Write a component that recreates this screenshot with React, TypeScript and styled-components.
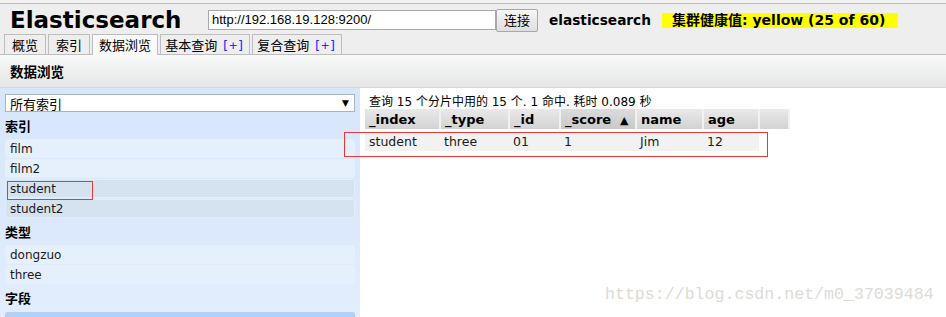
import React from "react";
import styled, { createGlobalStyle } from "styled-components";

const GlobalStyle = createGlobalStyle`
  html, body { margin: 0; padding: 0; background: #ffffff; }
  body {
    font-family: "DejaVu Sans", "Noto Sans CJK SC", sans-serif;
    font-size: 12px;
    color: #000;
    overflow: hidden;
  }
`;

const CJK = `"DejaVu Sans", "Noto Sans CJK SC", sans-serif`;

const Page = styled.div`
  position: relative;
  width: 946px;
  height: 317px;
  overflow: hidden;
  padding-top: 3px;
  box-sizing: border-box;
  background: #f2f2f2;
`;

const Header = styled.div`
  background: #eeeeee;
  border-top: 1px solid #bdbdbd;
`;

const TopRow = styled.div`
  display: flex;
  align-items: center;
  height: 30px;
  padding-left: 10px;
`;

const Title = styled.h1`
  margin: 0;
  font-family: "DejaVu Sans", sans-serif;
  font-weight: bold;
  font-size: 23px;
  line-height: 26px;
  color: #000;
  width: 198px;
  margin-top: 2px;
`;

const UrlInput = styled.div`
  box-sizing: border-box;
  width: 288px;
  height: 20px;
  border: 1px solid #a9a9a9;
  background: #fff;
  font-family: "Liberation Sans", Arial, sans-serif;
  font-size: 13px;
  line-height: 18px;
  padding-left: 3px;
  margin-top: 2px;
`;

const ConnectButton = styled.div`
  box-sizing: border-box;
  width: 42px;
  height: 23px;
  margin-top: 2px;
  border: 1px solid #a8a8a8;
  border-radius: 2px;
  background: linear-gradient(#f6f6f6, #dedede);
  font-family: ${CJK};
  font-size: 13px;
  line-height: 21px;
  text-align: center;
`;

const ClusterName = styled.span`
  margin-left: 11px;
  font-family: "DejaVu Sans", sans-serif;
  font-weight: bold;
  font-size: 13.7px;
  margin-top: 2px;
`;

const Health = styled.span`
  margin-left: 11px;
  margin-top: 2px;
  display: inline-block;
  background: #ffff00;
  height: 15px;
  line-height: 15px;
  padding: 0 10px;
  width: 216px;
  font-family: ${CJK};
  font-weight: bold;
  font-size: 14px;
`;

const TabBar = styled.div`
  display: flex;
  align-items: flex-end;
  gap: 2px;
  height: 20px;
  padding-left: 4px;
  border-bottom: 1px solid #bdbdbd;
`;

const Tab = styled.div<{ $active?: boolean; $w: number }>`
  box-sizing: border-box;
  width: ${(p) => p.$w}px;
  height: ${(p) => (p.$active ? 21 : 20)}px;
  margin-bottom: ${(p) => (p.$active ? -1 : 0)}px;
  border: 1px solid #bdbdbd;
  border-bottom: none;
  background: ${(p) => (p.$active ? "#fafafa" : "#eeeeee")};
  font-family: ${CJK};
  font-size: 13px;
  line-height: 22px;
  text-align: center;
  white-space: nowrap;
`;

const Plus = styled.span`
  color: #2a2aff;
  font-family: "DejaVu Sans Mono", monospace;
  font-size: 13px;
`;

const Band = styled.div`
  height: 32px;
  background: linear-gradient(#f8f9f9, #e6e6e6);
  border-bottom: 1px solid #cfd9e4;
  display: flex;
  align-items: center;
  padding-left: 10px;
  font-family: ${CJK};
  font-weight: bold;
  font-size: 13.5px;
`;

const Body = styled.div`
  display: flex;
  height: 230px;
`;

const Sidebar = styled.div`
  width: 360px;
  box-sizing: border-box;
  padding: 6px 5px 0 5px;
  background: linear-gradient(#d6e6fb, #dce9fc 60%, #e2eefd);
`;

const SelectBox = styled.div`
  box-sizing: border-box;
  height: 18px;
  border: 1px solid #a9b3bd;
  background: #fff;
  display: flex;
  align-items: center;
  justify-content: space-between;
  padding: 0 5px 0 4px;
  font-family: ${CJK};
  font-size: 13px;
`;

const Arrow = styled.span`
  font-size: 9px;
  font-family: "DejaVu Sans", sans-serif;
`;

const SectionLabel = styled.div`
  height: 27px;
  line-height: 29px;
  font-family: ${CJK};
  font-weight: bold;
  font-size: 13px;
`;

const ItemList = styled.div`
  display: flex;
  flex-direction: column;
  gap: 1px;
`;

const Item = styled.div<{ $sel?: boolean }>`
  box-sizing: border-box;
  height: 19px;
  line-height: 18px;
  padding-left: 4px;
  border-radius: 3px;
  font-size: 12px;
  color: #1a1a1a;
  background: ${(p) => (p.$sel ? "#d5e2f0" : "#e6effc")};
  border: 1px solid ${(p) => (p.$sel ? "#e4edf8" : "transparent")};
`;

const FieldRow = styled.div`
  height: 10px;
  margin-top: 1px;
  background: #b3d1f8;
  border-radius: 2px 2px 0 0;
`;

const Main = styled.div`
  flex: 1;
  background: #ffffff;
  padding: 5px 0 0 5px;
`;

const Summary = styled.div`
  font-family: ${CJK};
  font-size: 12px;
  line-height: 16px;
  padding: 1px 0 0 4px;
  height: 15px;
`;

const Table = styled.table`
  border-collapse: collapse;
  table-layout: fixed;
`;

const Th = styled.th<{ $w: number; $sorted?: boolean }>`
  width: ${(p) => p.$w}px;
  height: 20px;
  padding: 0 0 0 4px;
  box-sizing: border-box;
  text-align: left;
  font-family: "DejaVu Sans", sans-serif;
  font-weight: bold;
  font-size: 13px;
  background: ${(p) =>
    p.$sorted
      ? "linear-gradient(#dcdcdc, #c9c9c9)"
      : "linear-gradient(#e9e9e9, #d3d3d3)"};
  border-right: 2px solid #f1f1f1;
  white-space: nowrap;
`;

const SortMark = styled.span`
  font-size: 11px;
  margin-left: 9px;
`;

const Spacer = styled.tr`
  height: 3px;
`;

const Td = styled.td<{ $empty?: boolean }>`
  height: 19px;
  padding: 0 0 0 4px;
  font-size: 12.5px;
  color: #1a1a1a;
  background: ${(p) => (p.$empty ? "transparent" : "#f2f2f2")};
`;

const RedBox = styled.div<{ $x: number; $y: number; $w: number; $h: number }>`
  position: absolute;
  left: ${(p) => p.$x}px;
  top: ${(p) => p.$y}px;
  width: ${(p) => p.$w}px;
  height: ${(p) => p.$h}px;
  border: 1px solid #e8393a;
  box-sizing: border-box;
  pointer-events: none;
`;

const Watermark = styled.div`
  position: absolute;
  left: 605px;
  top: 285px;
  font-family: "Liberation Mono", monospace;
  font-size: 16.6px;
  color: #dcdcd4;
  white-space: nowrap;
`;

const columns = [
  { name: "_index", w: 75 },
  { name: "_type", w: 69 },
  { name: "_id", w: 51 },
  { name: "_score", w: 76, sorted: true },
  { name: "name", w: 67 },
  { name: "age", w: 56 },
  { name: "", w: 30 },
];

const row = ["student", "three", "01", "1", "Jim", "12"];

export default function App() {
  return (
    <>
      <GlobalStyle />
      <Page>
        <Header>
          <TopRow>
            <Title>Elasticsearch</Title>
            <UrlInput>http://192.168.19.128:9200/</UrlInput>
            <ConnectButton>连接</ConnectButton>
            <ClusterName>elasticsearch</ClusterName>
            <Health>集群健康值: yellow (25 of 60)</Health>
          </TopRow>
          <TabBar>
            <Tab $w={42}>概览</Tab>
            <Tab $w={42}>索引</Tab>
            <Tab $w={66} $active>
              数据浏览
            </Tab>
            <Tab $w={90}>
              基本查询 <Plus>[+]</Plus>
            </Tab>
            <Tab $w={90}>
              复合查询 <Plus>[+]</Plus>
            </Tab>
          </TabBar>
        </Header>
        <Band>数据浏览</Band>
        <Body>
          <Sidebar>
            <SelectBox>
              <span>所有索引</span>
              <Arrow>▼</Arrow>
            </SelectBox>
            <SectionLabel>索引</SectionLabel>
            <ItemList>
              <Item>film</Item>
              <Item>film2</Item>
              <Item $sel>student</Item>
              <Item $sel>student2</Item>
            </ItemList>
            <SectionLabel>类型</SectionLabel>
            <ItemList>
              <Item>dongzuo</Item>
              <Item>three</Item>
            </ItemList>
            <SectionLabel>字段</SectionLabel>
            <FieldRow />
          </Sidebar>
          <Main>
            <Summary>查询 15 个分片中用的 15 个. 1 命中. 耗时 0.089 秒</Summary>
            <Table>
              <thead>
                <tr>
                  {columns.map((c, i) => (
                    <Th key={i} $w={c.w} $sorted={c.sorted}>
                      {c.name}
                      {c.sorted && <SortMark>▲</SortMark>}
                    </Th>
                  ))}
                </tr>
              </thead>
              <tbody>
                <Spacer />
                <tr>
                  {row.map((v, i) => (
                    <Td key={i}>{v}</Td>
                  ))}
                  <Td $empty />
                </tr>
              </tbody>
            </Table>
          </Main>
        </Body>
        <RedBox $x={7} $y={181} $w={86} $h={19} />
        <RedBox $x={344} $y={132} $w={424} $h={25} />
        <Watermark>https://blog.csdn.net/m0_37039484</Watermark>
      </Page>
    </>
  );
}
